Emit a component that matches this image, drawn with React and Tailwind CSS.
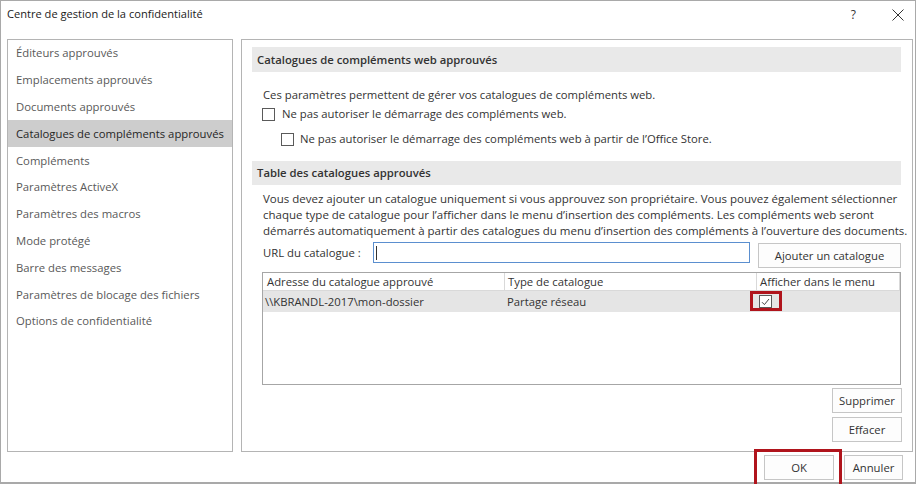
import { useState } from 'react';

const navItems = [
  'Éditeurs approuvés',
  'Emplacements approuvés',
  'Documents approuvés',
  'Catalogues de compléments approuvés',
  'Compléments',
  'Paramètres ActiveX',
  'Paramètres des macros',
  'Mode protégé',
  'Barre des messages',
  'Paramètres de blocage des fichiers',
  'Options de confidentialité',
];

function Checkbox({ checked }) {
  return (
    <span className="w-[13px] h-[13px] border border-[#5a5a5a] bg-white flex items-center justify-center shrink-0">
      {checked && (
        <svg width="9" height="8" viewBox="0 0 9 8" fill="none">
          <path d="M1 4.2 L3.4 6.6 L8 1" stroke="#444" strokeWidth="1" />
        </svg>
      )}
    </span>
  );
}

function SectionHeader({ children, h = 'h-[25px]' }) {
  return (
    <div className={`${h} bg-[#e9e9e9] flex items-center pl-[5px] font-semibold text-[#333]`}>
      {children}
    </div>
  );
}

function Button({ children, className = '' }) {
  return (
    <button
      type="button"
      className={`h-[25px] border border-[#c6c6c6] bg-[#fdfdfd] text-[#333] flex items-center justify-center ${className}`}
    >
      {children}
    </button>
  );
}

export default function App() {
  const [selected, setSelected] = useState(3);

  return (
    <div className="w-[916px] h-[484px] bg-white overflow-hidden font-['Open_Sans','Liberation_Sans',sans-serif] text-[11.3px] leading-[16px]">
      <div className="w-[916px] h-[484px] border border-b-2 border-[#a9a9a9] flex flex-col">
        {/* title bar */}
        <div className="h-[38px] flex items-start justify-between pl-[6px] pr-[11px] pt-[5px]">
          <span className="text-[#1a1a1a] text-[11.1px]">Centre de gestion de la confidentialité</span>
          <div className="flex items-center gap-[36px] pt-[1px]">
            <span className="text-[#333] text-[12px]">?</span>
            <svg width="12" height="12" viewBox="0 0 12 12" stroke="#333" strokeWidth="1">
              <path d="M0.5 0.5 L11.5 11.5 M11.5 0.5 L0.5 11.5" />
            </svg>
          </div>
        </div>

        {/* body */}
        <div className="h-[413px] flex gap-[8px] pl-[6px]">
          <nav className="w-[226px] h-full border border-[#b4b4b4] flex flex-col">
            {navItems.map((item, i) => (
              <div
                key={item}
                onClick={() => setSelected(i)}
                className={`h-[26.8px] shrink-0 flex items-center pl-[8px] ${
                  selected === i ? 'bg-[#cdcdcd] text-[#262626]' : 'text-[#595959]'
                }`}
              >
                {item}
              </div>
            ))}
          </nav>

          <main className="w-[672px] h-full border border-[#b4b4b4] pt-[7px] pl-[10px] pr-[11px] flex flex-col text-[#333]">
            <SectionHeader>Catalogues de compléments web approuvés</SectionHeader>
            <p className="mt-[15px] pl-[11px]">Ces paramètres permettent de gérer vos catalogues de compléments web.</p>
            <label className="mt-[3px] pl-[10px] flex items-center gap-[7px]">
              <Checkbox />
              Ne pas autoriser le démarrage des compléments web.
            </label>
            <label className="mt-[9px] pl-[29px] flex items-center gap-[6px]">
              <Checkbox />
              Ne pas autoriser le démarrage des compléments web à partir de l’Office Store.
            </label>

            <div className="mt-[14px]">
              <SectionHeader h="h-[24px]">Table des catalogues approuvés</SectionHeader>
            </div>
            <p className="mt-[6px] pl-[11px] whitespace-nowrap text-[11.5px]">
              Vous devez ajouter un catalogue uniquement si vous approuvez son propriétaire. Vous pouvez également sélectionner
              <br />
              chaque type de catalogue pour l’afficher dans le menu d’insertion des compléments. Les compléments web seront
              <br />
              démarrés automatiquement à partir des catalogues du menu d’insertion des compléments à l’ouverture des documents.
            </p>

            <div className="mt-[3px] pl-[11px] flex items-start">
              <span className="w-[110px] h-[21px] flex items-center">URL du catalogue :</span>
              <div className="w-[377px] h-[21px] border border-[#5b8fcf] flex items-center pl-[2px]">
                <span className="w-px h-[14px] bg-[#333]" />
              </div>
              <Button className="ml-[8px] mt-[1px] w-[143px] h-[24px]">Ajouter un catalogue</Button>
            </div>

            <div className="mt-[4px] ml-[10px] w-[639px] h-[113px] border border-[#a6a6a6] flex flex-col">
              <div className="h-[18px] flex border-b border-[#d9d9d9]">
                <div className="w-[242px] pl-[4px] flex items-center border-r border-[#d9d9d9]">Adresse du catalogue approuvé</div>
                <div className="w-[252px] pl-[3px] flex items-center border-r border-[#d9d9d9]">Type de catalogue</div>
                <div className="flex-1 pl-[3px] flex items-center border-r border-[#d9d9d9]">Afficher dans le menu</div>
              </div>
              <div className="h-[21px] bg-[#e5e5e5] flex items-center">
                <div className="w-[242px] pl-[2px]">\\KBRANDL-2017\mon-dossier</div>
                <div className="w-[252px] pl-[2px]">Partage réseau</div>
                <div className="flex-1 pl-[2px] flex items-center">
                  <div className="relative">
                    <Checkbox checked />
                    <div className="absolute left-[-9px] top-[-4px] w-[32px] h-[20px] border-[3px] border-[#b0141c]" />
                  </div>
                </div>
              </div>
            </div>

            <Button className="mt-[3px] ml-auto w-[70px] mr-[-1px]">Supprimer</Button>
            <Button className="mt-[4px] ml-auto w-[70px] mr-[-1px]">Effacer</Button>
          </main>
        </div>

        {/* footer */}
        <div className="flex-1 flex justify-end gap-[10px] pr-[12px] pt-[3px]">
          <div className="relative">
            <Button className="w-[70px] h-[24px] border-[#3f7fcf]">OK</Button>
            <div className="absolute left-[-10px] right-[-8px] top-[-6px] bottom-[-5px] border-[3px] border-[#b0141c]" />
          </div>
          <Button className="w-[59px] h-[24px]">Annuler</Button>
        </div>
      </div>
    </div>
  );
}
